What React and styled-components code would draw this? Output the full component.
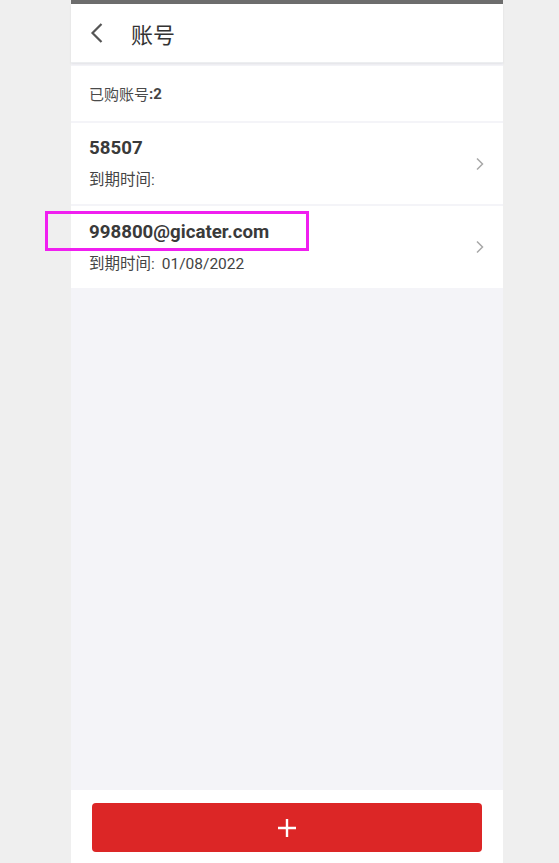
import React from "react";
import styled, { createGlobalStyle } from "styled-components";

const Global = createGlobalStyle`
  html, body { margin: 0; padding: 0; background: #efefef; }
  body { font-family: Roboto, "Noto Sans CJK SC", sans-serif; }
`;

const Phone = styled.div`
  margin-left: 71px;
  width: 432px;
  height: 863px;
  display: flex;
  flex-direction: column;
  background: #f4f4f8;
  position: relative;
`;

const StatusStrip = styled.div`
  height: 4px;
  background: #6d6d6d;
`;

const Header = styled.header`
  height: 58px;
  background: #fff;
  display: flex;
  align-items: center;
  padding-left: 16px;
  gap: 24px;
  box-shadow: 0 1px 2px rgba(0, 0, 0, 0.08);
  border-bottom: 1px solid #eceef0;
  z-index: 1;
`;

const BackBtn = styled.div`
  width: 20px;
  height: 24px;
  display: flex;
  align-items: center;
  justify-content: center;
`;

const Title = styled.h1`
  margin: 0;
  font-size: 22px;
  font-weight: 400;
  color: #333;
  font-family: "Noto Sans CJK SC", sans-serif;
`;

const List = styled.div`
  margin-top: 3px;
  display: flex;
  flex-direction: column;
  gap: 2px;
`;

const Summary = styled.div`
  height: 55px;
  background: #fff;
  display: flex;
  align-items: center;
  padding-left: 18px;
  font-size: 15px;
  color: #4a4a4a;
  font-family: "Noto Sans CJK SC", sans-serif;
  b { font-family: Roboto, sans-serif; font-weight: 700; color: #444; }
`;

const Row = styled.div`
  height: ${(p) => p.$h}px;
  background: #fff;
  display: flex;
  align-items: center;
  justify-content: space-between;
  padding: 0 18px;
  box-sizing: border-box;
`;

const RowText = styled.div`
  display: flex;
  flex-direction: column;
  gap: 11px;
`;

const AccountName = styled.div`
  font-size: 18.7px;
  font-weight: 700;
  color: #3a3a3a;
  line-height: 22px;
  font-family: Roboto, sans-serif;
`;

const Expiry = styled.div`
  font-size: 15.5px;
  color: #444;
  line-height: 20px;
  font-family: Roboto, "Noto Sans CJK SC", sans-serif;
`;

const DateText = styled.span`
  margin-left: 7px;
`;

const Spacer = styled.div`
  flex: 1;
`;

const Footer = styled.div`
  height: 73px;
  background: #fff;
  padding: 13px 21px 0 21px;
  box-sizing: border-box;
`;

const AddButton = styled.button`
  width: 390px;
  height: 49px;
  border: none;
  border-radius: 4px;
  background: #dc2626;
  display: flex;
  align-items: center;
  justify-content: center;
  padding: 0;
`;

const Highlight = styled.div`
  position: absolute;
  left: -26px;
  top: 211px;
  width: 264px;
  height: 40px;
  border: 3px solid #f01ff0;
  box-sizing: border-box;
  pointer-events: none;
`;

const Chevron = () => (
  <svg width="10" height="14" viewBox="0 0 10 14">
    <path d="M2 1.5 L7.5 7 L2 12.5" fill="none" stroke="#a8a8a8" strokeWidth="1.5" />
  </svg>
);

export default function App() {
  return (
    <>
      <Global />
      <Phone>
        <StatusStrip />
        <Header>
          <BackBtn>
            <svg width="14" height="22" viewBox="0 0 14 22">
              <path d="M11.5 2 L2.5 11 L11.5 20" fill="none" stroke="#555" strokeWidth="2.2" />
            </svg>
          </BackBtn>
          <Title>账号</Title>
        </Header>
        <List>
          <Summary>
            已购账号<b>:2</b>
          </Summary>
          <Row $h={81}>
            <RowText>
              <AccountName>58507</AccountName>
              <Expiry>到期时间:</Expiry>
            </RowText>
            <Chevron />
          </Row>
          <Row $h={82}>
            <RowText>
              <AccountName>998800@gicater.com</AccountName>
              <Expiry>
                到期时间:<DateText>01/08/2022</DateText>
              </Expiry>
            </RowText>
            <Chevron />
          </Row>
        </List>
        <Spacer />
        <Footer>
          <AddButton aria-label="add">
            <svg width="22" height="22" viewBox="0 0 22 22">
              <path d="M11 2 V20 M2 11 H20" stroke="#fff" strokeWidth="2.4" />
            </svg>
          </AddButton>
        </Footer>
        <Highlight />
      </Phone>
    </>
  );
}
